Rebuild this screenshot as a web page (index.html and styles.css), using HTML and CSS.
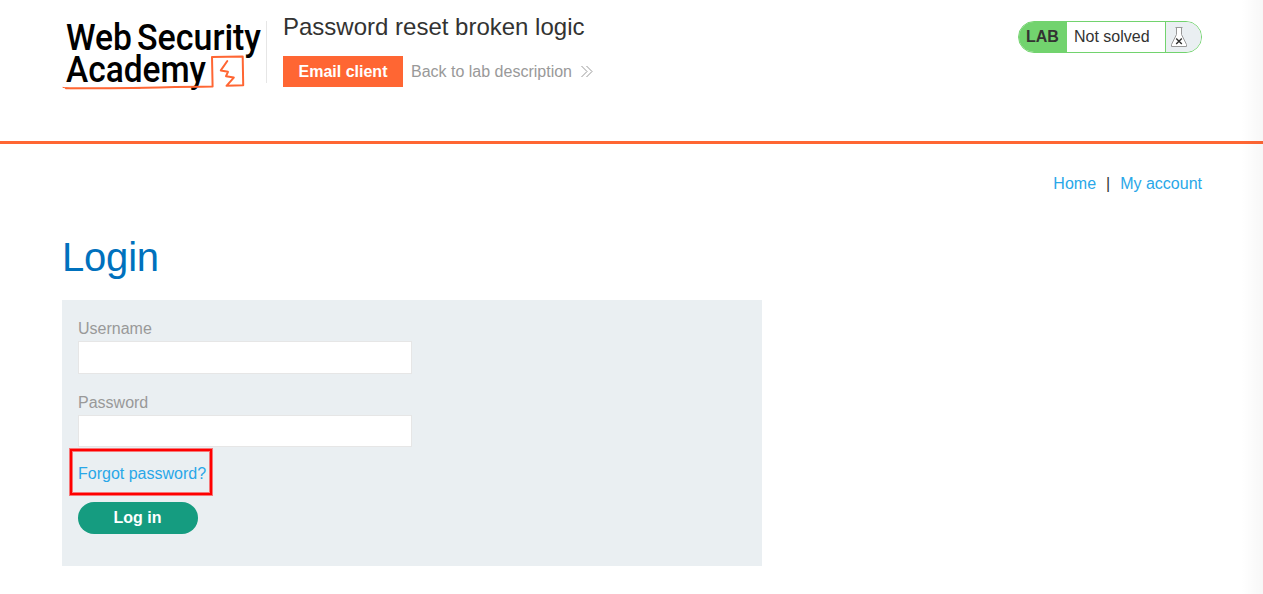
FILE: index.html
```html
<!DOCTYPE html>
<html lang="en">
  <head>
    <meta charset="UTF-8" />
    <title>Password reset broken logic</title>
    <link rel="stylesheet" href="styles.css">
  </head>
  <body>
    <header class="lab-header">
      <svg class="logo" width="204" height="76" viewBox="62 18 204 76">
        <g class="logo-text">
          <text x="66" y="49.5" textLength="66" lengthAdjust="spacingAndGlyphs">Web</text>
          <text x="137" y="49.5" textLength="124" lengthAdjust="spacingAndGlyphs">Security</text>
          <text x="66" y="82" textLength="140" lengthAdjust="spacingAndGlyphs">Academy</text>
        </g>
        <g class="logo-line">
          <path d="M66 88.2 C100 88.6 150 87.4 212.6 86.6 L212 57 L242.7 56.6 L243.2 85.3 L226.5 85.8 L233.8 77.6 L226 76.2 L228 71.8 L220.8 70.4 L227.3 61" />
          <path class="thin" d="M63 87.4 L70 88.6 L140 88.2" />
        </g>
      </svg>
      <div class="title">
        <h2>Password reset broken logic</h2>
        <div class="links">
          <a class="email-button" href="#">Email client</a>
          <a class="back-link" href="#">Back to lab description
            <svg width="14" height="14" viewBox="0 0 14 14">
              <path d="M1.5 1 L7 6.5 L1.5 12 M6.5 1 L12 6.5 L6.5 12" />
            </svg>
          </a>
        </div>
      </div>
      <div class="lab-status">
        <span class="status-label">LAB</span>
        <span class="status-text">Not solved</span>
        <span class="status-icon">
          <svg width="18" height="22" viewBox="0 0 18 22">
            <path class="flask" d="M5.5 1.5 H12.5 M6.5 1.5 V8.5 L1.5 18.5 V20.5 H16.5 V18.5 L11.5 8.5 V1.5" />
            <path class="cross" d="M6.2 12.4 L11.8 18 M11.8 12.4 L6.2 18" />
          </svg>
        </span>
      </div>
    </header>

    <main class="page">
      <nav class="top-links">
        <a href="#">Home</a>
        <span>|</span>
        <a href="#">My account</a>
      </nav>

      <h1>Login</h1>
      <form class="login-form">
        <label for="username">Username</label>
        <input id="username" name="username" type="text" />
        <label for="password">Password</label>
        <input id="password" name="password" type="password" />
        <a class="forgot" href="#">Forgot password?</a>
        <button type="submit">Log in</button>
      </form>
    </main>
    <div class="edge-shade"></div>
  </body>
</html>
```
FILE: styles.css
```css
* {
  box-sizing: border-box;
}

body {
  margin: 0;
  height: 594px;
  overflow: hidden;
  background: white;
  color: #333332;
  font-family: "Liberation Sans", Arial, sans-serif;
  font-size: 16px;
  line-height: 20px;
}

a {
  color: #29a7e8;
  text-decoration: none;
}

/* header */
.lab-header {
  display: flex;
  align-items: flex-start;
  height: 144px;
  padding: 0 61px 0 62px;
  border-bottom: 3px solid #ff6633;
}

.logo {
  margin-top: 18px;
  overflow: visible;
}

.logo-text {
  font-family: Roboto, sans-serif;
  font-size: 37.5px;
  font-weight: 500;
  fill: #000;
}

.logo-line {
  fill: none;
  stroke: #ff6633;
  stroke-width: 2;
  stroke-linejoin: round;
  stroke-linecap: round;
}

.logo-line .thin {
  stroke-width: 1;
}

.title {
  margin-top: 21px;
  height: 62px;
  padding-left: 16px;
  border-left: 1px solid #e6e6e6;
}

.title h2 {
  margin: -8px 0 15px;
  font-size: 24px;
  font-weight: normal;
  line-height: 28px;
}

.links {
  display: flex;
  align-items: center;
  gap: 8px;
}

.email-button {
  width: 120px;
  height: 31px;
  background: #ff6633;
  color: white;
  font-weight: bold;
  line-height: 31px;
  text-align: center;
}

.back-link {
  display: flex;
  align-items: center;
  gap: 8px;
  color: #999;
}

.back-link svg {
  fill: none;
  stroke: #999;
}

.lab-status {
  display: flex;
  width: 184px;
  height: 32px;
  margin: 21px 0 0 auto;
  border: 1px solid #72d36e;
  border-radius: 16px;
  overflow: hidden;
  line-height: 30px;
}

.status-label {
  width: 48px;
  padding-left: 7px;
  background: #72d36e;
  font-weight: bold;
}

.status-text {
  width: 98px;
  padding-left: 7px;
}

.status-icon {
  flex: 1;
  padding: 4px 0 0 4px;
  border-left: 1px solid #72d36e;
  background: #eaeff2;
  line-height: 0;
}

.flask {
  fill: white;
  stroke: #999;
}

.cross {
  fill: none;
  stroke: #333332;
  stroke-width: 1.4;
}

/* page */
.page {
  padding: 30px 61px 0 62px;
}

.top-links {
  display: flex;
  justify-content: flex-end;
  gap: 10px;
}

h1 {
  margin: 39px 0 19px;
  color: #0071bd;
  font-size: 40px;
  font-weight: normal;
  letter-spacing: -0.2px;
  line-height: 48px;
}

.login-form {
  display: flex;
  flex-direction: column;
  align-items: flex-start;
  width: 700px;
  height: 266px;
  padding: 19px 16px;
  background: #eaeff2;
  color: #999;
}

.login-form label {
  height: 22px;
}

.login-form input {
  width: 334px;
  height: 33px;
  margin-bottom: 19px;
  border: 1px solid #e6e6e6;
  background: white;
}

.login-form #password {
  height: 32px;
  margin-bottom: 17px;
}

.forgot {
  position: relative;
  margin-bottom: 18px;
}

/* red frame around the link */
.forgot::after {
  content: "";
  position: absolute;
  box-sizing: border-box;
  top: -15px;
  left: -8px;
  width: 142px;
  height: 46px;
  border: 2px solid red;
  box-shadow: 0 0 0 1px rgba(255, 0, 0, 0.5), inset 0 0 0 1px rgba(255, 0, 0, 0.5);
}

.login-form button {
  width: 120px;
  height: 32px;
  padding: 0 1px 0 0;
  border: none;
  border-radius: 16px;
  background: #159c80;
  color: white;
  font: bold 16px "Liberation Sans", Arial, sans-serif;
}

.edge-shade {
  position: absolute;
  top: 0;
  right: 0;
  width: 22px;
  height: 594px;
  background: linear-gradient(to right, transparent, rgba(0, 0, 0, 0.03));
}
```
